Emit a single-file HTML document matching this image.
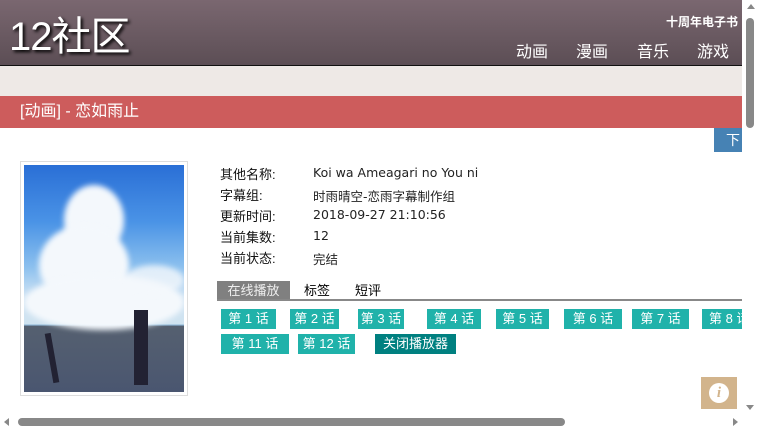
<!DOCTYPE html>
<html><head><meta charset="utf-8"><style>
*{margin:0;padding:0;box-sizing:border-box}
body{width:758px;height:430px;overflow:hidden;position:relative;background:#fff;font-family:"Liberation Sans","Noto Sans CJK SC",sans-serif;}
.hdr{position:absolute;left:0;top:0;width:742px;height:66px;background:linear-gradient(#7a6770,#5c4e55);border-bottom:1px solid #111}
.logo{position:absolute;left:9px;top:14px;color:#fff;font-size:40px;line-height:46px;text-shadow:2px 2px 3px #000;letter-spacing:-1px;font-family:"Liberation Sans Narrow","Liberation Sans","Noto Sans CJK SC",sans-serif}
.ten{position:absolute;right:4px;top:13px;color:#fff;font-size:12px;font-weight:bold}
.nav{position:absolute;top:38px;color:#fff;font-size:16px}
.band{position:absolute;left:0;top:66px;width:742px;height:30px;background:#eee9e6}
.red{position:absolute;left:0;top:96px;width:742px;height:32px;background:#cd5c5c;color:#fff;font-size:16px;line-height:32px;padding-left:20px}
.blue{position:absolute;left:714px;top:128px;width:28px;height:24px;background:#4682b4;color:#fff;font-size:14px;line-height:24px;padding-left:12px;overflow:hidden}
.img{position:absolute;left:20px;top:161px;width:168px;height:235px;border:1px solid #ddd;padding:3px}
.img .p{position:relative;width:100%;height:100%;overflow:hidden;background:linear-gradient(#2a6fd6 0%,#4a93e6 25%,#8cc0ee 45%,#cfe3f4 58%,#cfe3f0 70%,#8fb8d8 70.5%,#556070 71%,#4a5670 100%)}
.cl{position:absolute;background:#f4f8fc;border-radius:50%;filter:blur(3px)}
.lab{position:absolute;left:220px;font-size:13px;color:#111}
.val{position:absolute;left:313px;font-size:12.5px;color:#222;font-family:"DejaVu Sans","Noto Sans CJK SC",sans-serif}
.tab{position:absolute;top:281px;height:19px;font-size:13px;line-height:19px}
.line{position:absolute;left:217px;top:299px;width:525px;height:2px;background:#888}
.b{position:absolute;height:20px;background:#20b2aa;color:#fff;font-size:13px;line-height:20px;text-align:center;white-space:nowrap;overflow:hidden}
.vs{position:absolute;left:742px;top:0;width:16px;height:414px;background:#fff}
.hs{position:absolute;left:0;top:414px;width:742px;height:16px;background:#fff}
</style></head><body>
<div class="hdr"><div class="logo">12社区</div><div class="ten">十周年电子书</div>
<span class="nav" style="left:516px">动画</span><span class="nav" style="left:576px">漫画</span><span class="nav" style="left:637px">音乐</span><span class="nav" style="left:697px">游戏</span></div>
<div class="band"></div>
<div class="red">[动画] - 恋如雨止</div>
<div class="blue">下载</div>
<div class="img"><div class="p">
<div class="cl" style="left:40px;top:20px;width:60px;height:70px"></div>
<div class="cl" style="left:15px;top:60px;width:90px;height:80px"></div>
<div class="cl" style="left:0px;top:110px;width:160px;height:55px"></div>
<div class="cl" style="left:100px;top:100px;width:60px;height:30px;opacity:.8"></div>
<div style="position:absolute;left:25px;top:168px;width:6px;height:50px;background:#223;transform:rotate(-10deg)"></div>
<div style="position:absolute;left:110px;top:145px;width:14px;height:75px;background:#223"></div>
</div></div>
<div class="lab" style="top:164px">其他名称:</div><div class="val" style="top:165px">Koi wa Ameagari no You ni</div>
<div class="lab" style="top:185px">字幕组:</div><div class="val" style="top:186px">时雨晴空-恋雨字幕制作组</div>
<div class="lab" style="top:206px">更新时间:</div><div class="val" style="top:207px">2018-09-27 21:10:56</div>
<div class="lab" style="top:227px">当前集数:</div><div class="val" style="top:228px">12</div>
<div class="lab" style="top:248px">当前状态:</div><div class="val" style="top:249px">完结</div>
<div class="tab" style="left:217px;width:73px;background:#808080;color:#eee;text-align:center">在线播放</div>
<div class="tab" style="left:304px">标签</div><div class="tab" style="left:355px">短评</div>
<div class="line"></div>
<div class="b" style="left:221px;top:309px;width:55px">第 1 话</div>
<div class="b" style="left:290px;top:309px;width:49px">第 2 话</div>
<div class="b" style="left:358px;top:309px;width:46px">第 3 话</div>
<div class="b" style="left:427px;top:309px;width:54px">第 4 话</div>
<div class="b" style="left:496px;top:309px;width:53px">第 5 话</div>
<div class="b" style="left:564px;top:309px;width:58px">第 6 话</div>
<div class="b" style="left:632px;top:309px;width:57px">第 7 话</div>
<div class="b" style="left:702px;top:309px;width:40px;text-align:left;padding-left:7px">第 8 话</div>
<div class="b" style="left:221px;top:334px;width:68px">第 11 话</div>
<div class="b" style="left:298px;top:334px;width:57px">第 12 话</div>
<div class="b" style="left:375px;top:334px;width:81px;background:#008080">关闭播放器</div>
<div style="position:absolute;left:701px;top:377px;width:36px;height:32px;background:#d2b48c"><div style="position:absolute;left:8px;top:6px;width:20px;height:20px;border-radius:50%;background:#fff;color:#d2b48c;font:italic bold 15px 'Liberation Serif',serif;text-align:center;line-height:20px">i</div></div>
<div class="vs"><div style="position:absolute;left:5px;top:4px;border:4px solid transparent;border-bottom:5px solid #888;border-top:0"></div><div style="position:absolute;left:4px;top:18px;width:8px;height:110px;background:#888;border-radius:4px"></div><div style="position:absolute;left:4px;top:405px;border:4px solid transparent;border-top:5px solid #888;border-bottom:0"></div></div>
<div class="hs"><div style="position:absolute;left:4px;top:4px;border:4px solid transparent;border-right:5px solid #888;border-left:0"></div><div style="position:absolute;left:18px;top:4px;width:547px;height:8px;background:#888;border-radius:4px"></div><div style="position:absolute;left:733px;top:4px;border:4px solid transparent;border-left:5px solid #888;border-right:0"></div></div>
</body></html>
